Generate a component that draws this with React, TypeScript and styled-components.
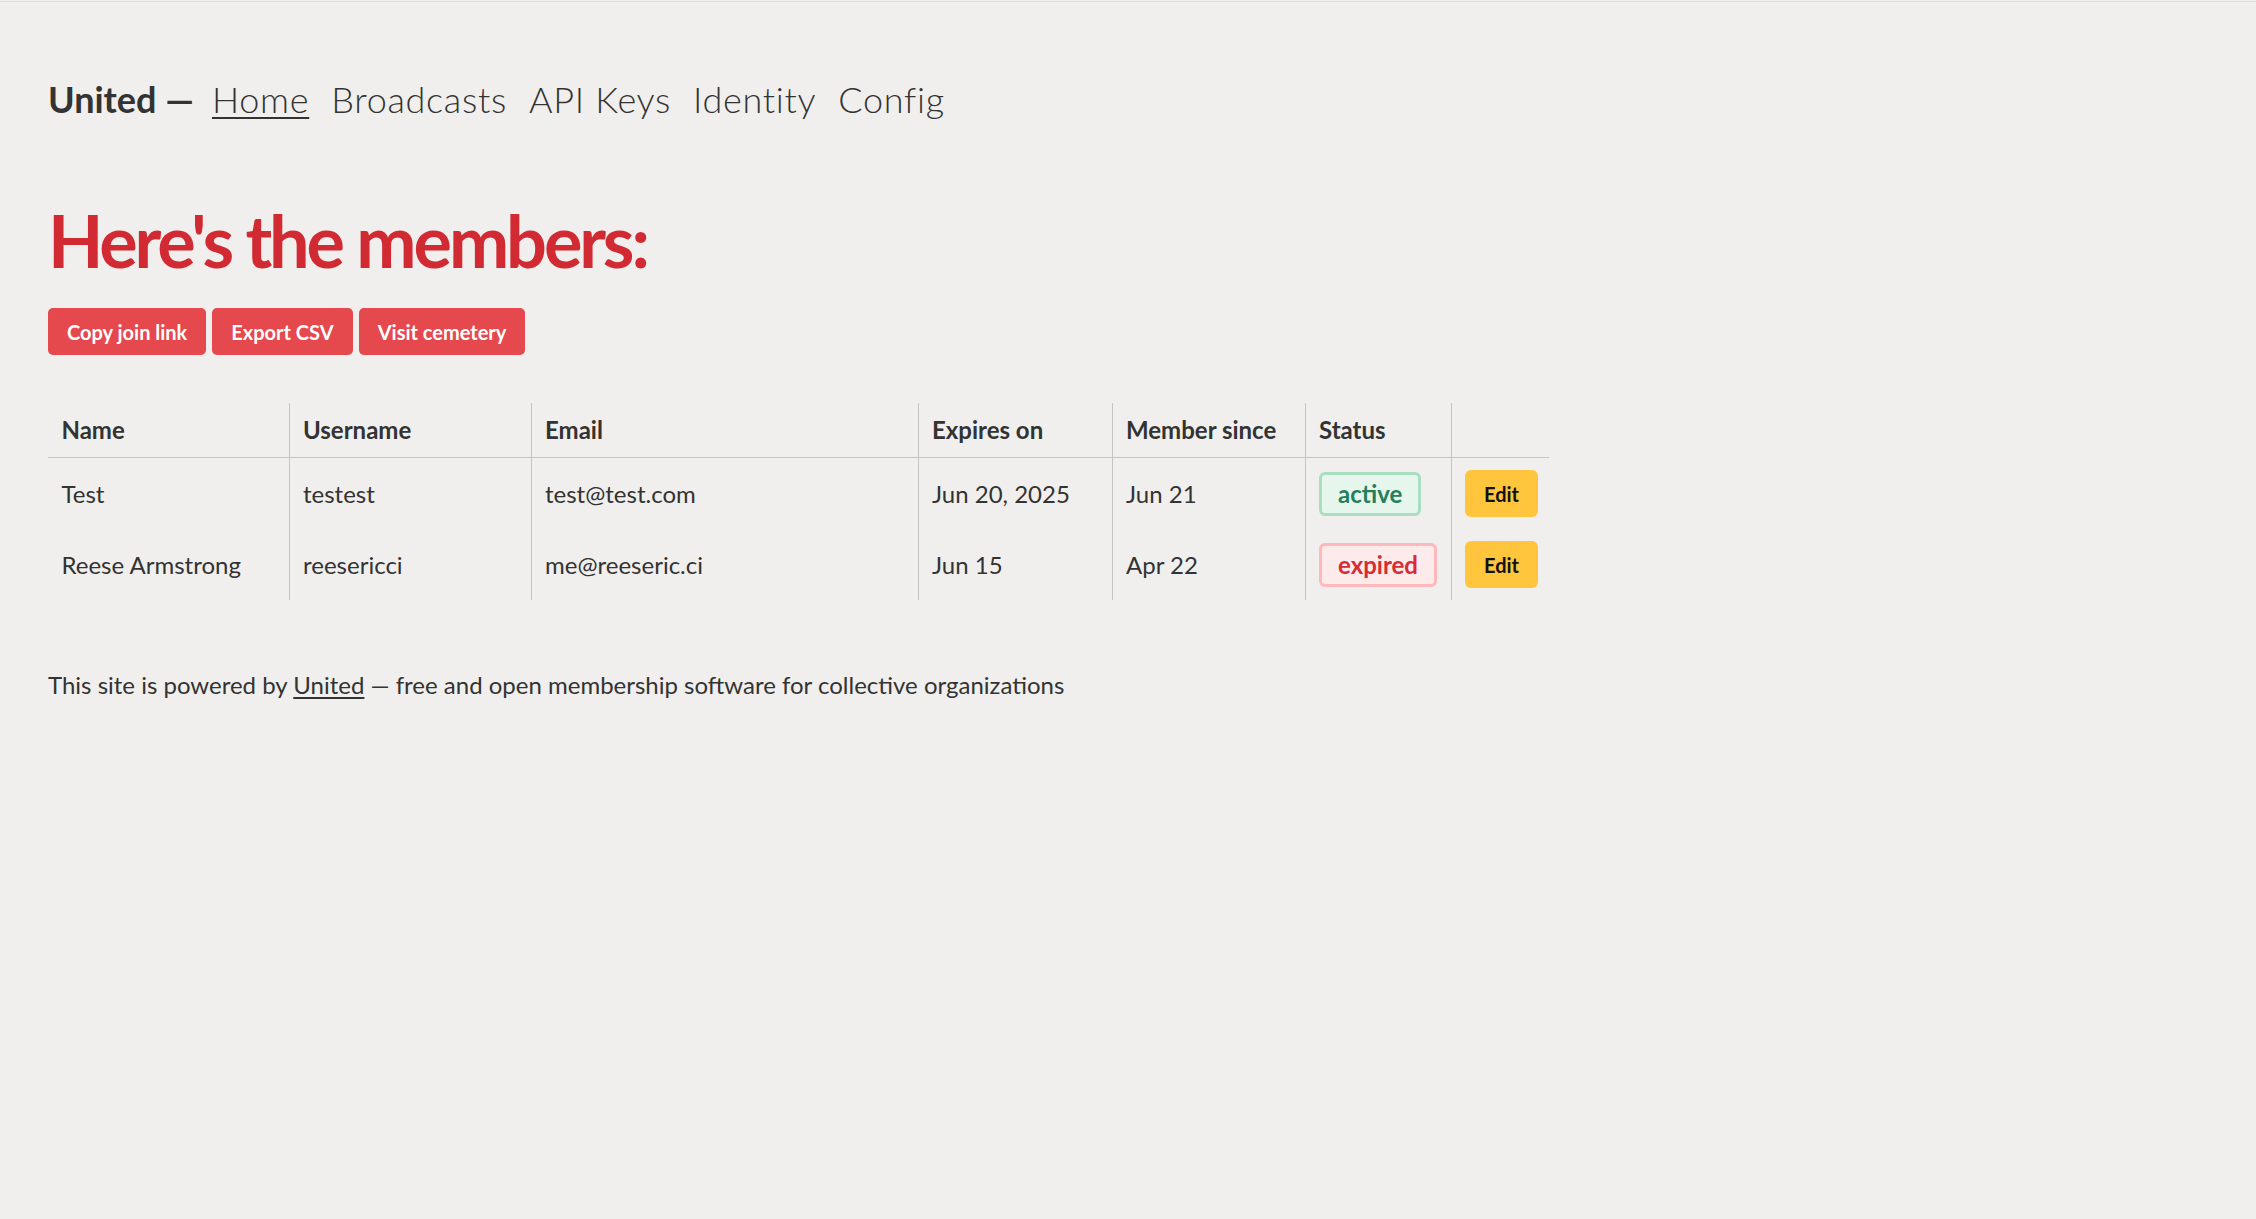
import styled, { createGlobalStyle } from 'styled-components'

const FONT = `Lato, "Liberation Sans", sans-serif`

const GlobalStyle = createGlobalStyle`
  html, body {
    margin: 0;
    padding: 0;
    background: #f0efed;
  }
  body {
    font-family: ${FONT};
    color: #333;
    font-size: 24px;
  }
`

const Page = styled.div`
  margin-top: 1px;
  border-top: 1px solid #dddcda;
  padding: 0 48px 40px;
`

const Nav = styled.nav`
  display: flex;
  align-items: baseline;
  gap: 22px;
  margin-top: 70px;
  font-size: 36px;
  line-height: 54px;
  font-weight: 300;

  .brand {
    font-weight: 700;
    margin-right: -4px;
  }
`

const NavLink = styled.a<{ $active?: boolean }>`
  color: #333;
  letter-spacing: 0.7px;
  text-decoration: ${p => (p.$active ? 'underline' : 'none')};
  text-decoration-thickness: 2px;
  text-underline-offset: 4px;
`

const Title = styled.h1`
  margin: 72px 0 0;
  font-size: 72px;
  line-height: 84px;
  font-weight: 700;
  letter-spacing: -3.1px;
  color: #d12a33;
`

const Actions = styled.div`
  display: flex;
  gap: 6px;
  margin-top: 26px;
`

const RedButton = styled.button`
  height: 47px;
  padding: 0 19px;
  border: none;
  border-radius: 5px;
  background: #e5484d;
  color: #fff;
  font-family: ${FONT};
  font-size: 20px;
  font-weight: 700;
`

const Table = styled.table`
  margin-top: 48px;
  border-collapse: collapse;
  table-layout: fixed;
  width: 1501px;

  th, td {
    text-align: left;
    padding: 12px 13.5px;
    border-left: 1px solid #c6c4c0;
  }
  th:first-child, td:first-child {
    border-left: none;
  }
  th {
    font-size: 24px;
    font-weight: 700;
    line-height: 30px;
    border-bottom: 1px solid #c6c4c0;
  }
  td {
    font-size: 24px;
    font-weight: 400;
    line-height: 30px;
    height: 47px;
    vertical-align: middle;
  }
`

const Col = styled.col<{ $w: number }>`
  width: ${p => p.$w}px;
`

const WidgetCell = styled.td`
  && {
    line-height: 0;
  }
`

const Badge = styled.span<{ $tone: 'ok' | 'bad' }>`
  display: inline-flex;
  align-items: center;
  box-sizing: border-box;
  height: 44px;
  padding: 0 16px;
  border-radius: 6px;
  border: 3px solid ${p => (p.$tone === 'ok' ? '#a9dfc1' : '#ffb9bc')};
  background: ${p => (p.$tone === 'ok' ? '#e6f6ec' : '#fdeaea')};
  color: ${p => (p.$tone === 'ok' ? '#23805a' : '#d62c36')};
  font-weight: 700;
  line-height: 30px;
  vertical-align: middle;
`

const EditButton = styled.button`
  height: 47px;
  padding: 0 19px;
  border: none;
  border-radius: 6px;
  background: #ffc53d;
  color: #111;
  font-family: ${FONT};
  font-size: 20px;
  font-weight: 700;
  line-height: 30px;
  vertical-align: middle;
`

const Footer = styled.p`
  margin: 67px 0 0;
  font-weight: 400;
  line-height: 36px;

  a {
    color: #333;
    text-decoration: underline;
    text-decoration-thickness: 1.5px;
    text-underline-offset: 3px;
  }
`

const members = [
  { name: 'Test', username: 'testest', email: 'test@test.com', expires: 'Jun 20, 2025', since: 'Jun 21', active: true },
  { name: 'Reese Armstrong', username: 'reesericci', email: 'me@reeseric.ci', expires: 'Jun 15', since: 'Apr 22', active: false },
]

export default function App() {
  return (
    <Page>
      <GlobalStyle />
      <Nav>
        <span className="brand">United —</span>
        <NavLink $active>Home</NavLink>
        <NavLink>Broadcasts</NavLink>
        <NavLink>API Keys</NavLink>
        <NavLink>Identity</NavLink>
        <NavLink>Config</NavLink>
      </Nav>
      <Title>Here's the members:</Title>
      <Actions>
        <RedButton>Copy join link</RedButton>
        <RedButton>Export CSV</RedButton>
        <RedButton>Visit cemetery</RedButton>
      </Actions>
      <Table>
        <colgroup>
          <Col $w={241} />
          <Col $w={242} />
          <Col $w={387} />
          <Col $w={194} />
          <Col $w={193} />
          <Col $w={146} />
          <Col $w={98} />
        </colgroup>
        <thead>
          <tr>
            <th>Name</th>
            <th>Username</th>
            <th>Email</th>
            <th>Expires on</th>
            <th>Member since</th>
            <th>Status</th>
            <th></th>
          </tr>
        </thead>
        <tbody>
          {members.map(m => (
            <tr key={m.username}>
              <td>{m.name}</td>
              <td>{m.username}</td>
              <td>{m.email}</td>
              <td>{m.expires}</td>
              <td>{m.since}</td>
              <WidgetCell>
                <Badge $tone={m.active ? 'ok' : 'bad'}>{m.active ? 'active' : 'expired'}</Badge>
              </WidgetCell>
              <WidgetCell>
                <EditButton>Edit</EditButton>
              </WidgetCell>
            </tr>
          ))}
        </tbody>
      </Table>
      <Footer>
        This site is powered by <a>United</a> — free and open membership software for collective organizations
      </Footer>
    </Page>
  )
}
